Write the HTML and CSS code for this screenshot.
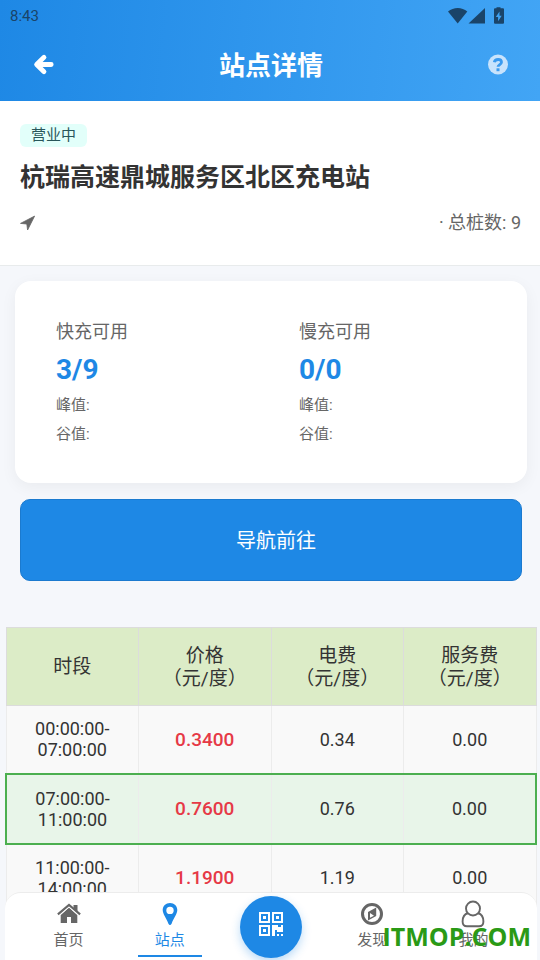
FILE: index.html
```html
<!DOCTYPE html>
<html lang="zh-CN">
<head>
<meta charset="utf-8">
<meta name="viewport" content="width=device-width, initial-scale=1">
<title>站点详情</title>
<link rel="stylesheet" href="styles.css">
</head>
<body>
<div class="app">
  <header class="header">
    <div class="status">
      <span>8:43</span>
      <svg class="status-icons" viewBox="0 0 58 18" aria-hidden="true">
        <path d="M0 4.500C5.500-.2 14-.2 19.300 4.500L9.700 16.500z"/>
        <path d="M37 1v15.500H20.500z"/>
        <path fill-rule="evenodd" d="M48.500 1.200v-.9h4v.9h2.500q1 0 1 1v13.500q0 1-1 1h-8q-1 0-1-1V2.200q0-1 1-1zM51.500 4.500l-3.700 5.500h2.300v4.300l3.600-5.600h-2.200z"/>
      </svg>
    </div>
    <div class="title-bar">
      <button class="icon-btn" type="button" aria-label="返回">
        <svg class="back" viewBox="0 0 20 20" aria-hidden="true"><path d="M10 2.300L2.600 9.500l7.400 7.200M4 9.500h13.200" fill="none" stroke="#fff" stroke-width="4.800" stroke-linecap="round" stroke-linejoin="round"/></svg>
      </button>
      <h1>站点详情</h1>
      <button class="icon-btn" type="button" aria-label="帮助">
        <svg class="help" viewBox="0 0 20 20" aria-hidden="true"><circle cx="10" cy="9.500" r="10" fill="#c8e3fc"/><path d="M6.300 7.300C7 3.500 13.500 3.600 13.500 7.300C13.500 9.500 10 9.600 10 11.800" fill="none" stroke="#3b9bf0" stroke-width="2.800"/><path d="M8.500 13.300h3v2.900h-3z" fill="#3b9bf0"/></svg>
      </button>
    </div>
  </header>

  <main class="content">
    <section class="info">
      <span class="chip">营业中</span>
      <h2>杭瑞高速鼎城服务区北区充电站</h2>
      <div class="meta">
        <svg class="arrow" viewBox="0 0 15 15" aria-hidden="true"><path d="M14.600.1L7.600 14 6.800 8 .5 7.400z" fill="#666" stroke="#666" stroke-width=".8" stroke-linejoin="round"/></svg>
        <span>· 总桩数: 9</span>
      </div>
    </section>

    <section class="card">
      <div class="stat">
        <p class="label">快充可用</p>
        <p class="value">3/9</p>
        <p class="sub">峰值:</p>
        <p class="sub">谷值:</p>
      </div>
      <div class="stat">
        <p class="label">慢充可用</p>
        <p class="value">0/0</p>
        <p class="sub">峰值:</p>
        <p class="sub">谷值:</p>
      </div>
    </section>

    <button class="go" type="button">导航前往</button>

    <table class="prices">
      <thead>
        <tr><th>时段</th><th>价格<br>（元/度）</th><th>电费<br>（元/度）</th><th>服务费<br>（元/度）</th></tr>
      </thead>
      <tbody>
        <tr><td>00:00:00-<br>07:00:00</td><td class="price">0.3400</td><td>0.34</td><td>0.00</td></tr>
        <tr class="current"><td>07:00:00-<br>11:00:00</td><td class="price">0.7600</td><td>0.76</td><td>0.00</td></tr>
        <tr><td>11:00:00-<br>14:00:00</td><td class="price">1.1900</td><td>1.19</td><td>0.00</td></tr>
      </tbody>
    </table>
  </main>

  <nav class="tabs">
    <a class="tab" href="#home">
      <svg viewBox="0 0 24 24" aria-hidden="true"><path d="M16.500 3h4v7.500l-4-4zM12 5.600l8.300 7.400v8H14v-6h-4v6H3.700v-8z" fill="#666"/><path d="M.9 12.300L12 2.900l11.100 9.400" fill="none" stroke="#666" stroke-width="2.200"/><path d="M2.600 13.300L12 5.200l9.400 8.100" fill="none" stroke="#fff" stroke-width=".8"/></svg>
      <span>首页</span>
    </a>
    <a class="tab active" href="#stations">
      <svg viewBox="0 0 24 24" aria-hidden="true"><path fill-rule="evenodd" d="M12 1C7.800 1 4.700 4.100 4.700 8.100C4.700 12 8.500 16.500 10.300 21.500Q12 24.500 13.700 21.500C15.500 16.500 19.300 12 19.300 8.100C19.300 4.100 16.200 1 12 1zM12 4.700a3.700 3.700 0 1 1 0 7.400a3.700 3.700 0 0 1 0-7.400z" fill="#1e88e5"/></svg>
      <span>站点</span>
    </a>
    <a class="tab" href="#scan" aria-label="扫码">
      <span class="scan">
        <svg viewBox="0 0 24 24" aria-hidden="true"><path fill-rule="evenodd" fill="#fff" d="M0 0h11v11H0zM2 2v7h7V2zM4 4h3v3H4zM13 0h11v11H13zM15 2v7h7V2zM17 4h3v3h-3zM0 13h11v11H0zM2 15v7h7v-7zM4 17h3v3H4zM13 13h6v2h3v-2h2v7h-6v-2h-2v6h-3zM18 22h2v2h-2zM22 22h2v2h-2z"/></svg>
      </span>
    </a>
    <a class="tab" href="#discover">
      <svg viewBox="0 0 24 24" aria-hidden="true"><circle cx="12" cy="12" r="9.500" fill="none" stroke="#666" stroke-width="3"/><path fill-rule="evenodd" d="M16.200 5.500v8.600L8 18.500V9.900zM10 11v4.800l4-2.100z" fill="#666"/></svg>
      <span>发现</span>
    </a>
    <a class="tab" href="#me">
      <svg class="person" viewBox="0 0 24 28" aria-hidden="true"><g fill="none" stroke="#666" stroke-width="1.900"><circle cx="12" cy="8.500" r="7"/><path d="M7 13.200C3.500 14 1.600 17 1.600 21.500Q1.600 26.300 6 26.300h12q4.400 0 4.400-4.800C22.400 17 20.500 14 17 13.200"/></g></svg>
      <span>我的</span>
    </a>
  </nav>
  <div class="watermark">ITMOP.COM</div>
</div>
</body>
</html>
```
FILE: styles.css
```css
* { box-sizing: border-box; }

body {
  margin: 0;
  background: #f5f7fb;
  color: #333;
  font-family: Roboto, "Noto Sans CJK SC", sans-serif;
}

h1, h2, p { margin: 0; }
button { border: 0; font: inherit; cursor: pointer; }

.app {
  position: relative;
  display: flex;
  flex-direction: column;
  height: 100vh;
  overflow: hidden;
}

.header {
  flex: none;
  padding-bottom: 8px;
  background: linear-gradient(96deg, #1e88e5, #42a5f5);
}

.status {
  display: flex;
  justify-content: space-between;
  align-items: center;
  height: 30px;
  padding: 1px 34px 0 10px;
  color: #1a4469;
  font-size: 15px;
}

.status-icons { width: 58px; height: 18px; fill: #1a4469; }

.title-bar {
  display: flex;
  justify-content: space-between;
  align-items: center;
  height: 63px;
  padding: 6px 32px 0 34px;
}

.title-bar h1 {
  padding-top: 2px;
  color: #fff;
  font-size: 26px;
  font-weight: 700;
  line-height: 36px;
}

.icon-btn { display: flex; padding: 0; background: none; }
.icon-btn svg { width: 20px; height: 20px; overflow: visible; }

.content {
  flex: 1;
  overflow-y: auto;
  scrollbar-width: none;
}

.info {
  height: 165px;
  padding: 23px 19px 0 20px;
  background: #fff;
  border-bottom: 1px solid #e8ebec;
}

.chip {
  display: block;
  width: fit-content;
  padding: 0 11px;
  border-radius: 6px;
  background: #e2fffa;
  color: #28565a;
  font-size: 15px;
  line-height: 23px;
}

.info h2 {
  margin-top: 13px;
  font-size: 25px;
  font-weight: 700;
  line-height: 36px;
}

.meta {
  display: flex;
  justify-content: space-between;
  align-items: center;
  margin-top: 15px;
  color: #666;
  font-size: 18px;
  line-height: 24px;
}

.arrow { width: 15px; height: 15px; overflow: visible; }

.card {
  display: grid;
  grid-template-columns: 1fr 1fr;
  margin: 15px 13px 16px 15px;
  padding: 36px 13px 34px;
  border-radius: 16px;
  background: #fff;
  box-shadow: 0 4px 16px rgba(0, 0, 0, 0.05);
}

.stat { padding: 0 28px; color: #666; }
.label { font-size: 18px; line-height: 30px; }
.value {
  padding-top: 1px;
  color: #1e88e5;
  font-size: 28px;
  font-weight: 700;
  line-height: 43px;
}
.sub { font-size: 15px; line-height: 29px; }

.go {
  display: block;
  width: calc(100% - 38px);
  height: 82px;
  margin: 0 18px 46px 20px;
  padding: 0 0 2px 10px;
  border: 1px solid #1b7acf;
  border-radius: 10px;
  background: #1e88e5;
  color: #fff;
  font-size: 20px;
}

.prices {
  width: calc(100% - 8px);
  margin: 0 3px 0 5px;
  border-collapse: collapse;
  table-layout: fixed;
  text-align: center;
}

.prices th {
  height: 78px;
  padding: 0;
  border: 1px solid #dcdcdc;
  background: #dcecc7;
  font-size: 19px;
  font-weight: 400;
  line-height: 23px;
}

.prices td {
  height: 68px;
  padding: 0;
  border: 1px solid #ececec;
  background: #f9f9f9;
  font-size: 18px;
  line-height: 21px;
}

.prices .price { color: #e63946; font-size: 19px; font-weight: 500; }
.prices .current { border: 2px solid #4caf50; }
.prices .current td {
  height: 70px;
  border-top: 2px solid #4caf50;
  border-bottom: 2px solid #4caf50;
  background: #e8f5e9;
}

.tabs {
  position: absolute;
  right: 3px;
  bottom: 0;
  left: 5px;
  display: flex;
  height: 68px;
  padding: 0 13px;
  border-top: 1px solid #ececec;
  border-radius: 16px 16px 0 0;
  background: #fff;
}

.tab {
  position: relative;
  display: flex;
  flex: 1;
  flex-direction: column;
  align-items: center;
  gap: 3px;
  padding-top: 9px;
  color: #666;
  font-size: 15px;
  line-height: 22px;
  text-decoration: none;
}

.tab svg { width: 24px; height: 24px; }
.tab .person { height: 28px; margin: -2px 0; }
.tab.active { color: #1e88e5; }

.tab.active::after {
  content: "";
  position: absolute;
  bottom: 3px;
  width: 64px;
  height: 2px;
  background: #1e88e5;
}

.scan {
  display: flex;
  flex: none;
  justify-content: center;
  width: 62px;
  height: 62px;
  margin-top: -6px;
  padding-top: 16px;
  border-radius: 50%;
  background: #1e88e5;
  box-shadow: 0 4px 10px rgba(30, 136, 229, 0.3);
}

.watermark {
  position: absolute;
  right: 9px;
  bottom: 6px;
  color: #2a9a16;
  font-family: "Open Sans", sans-serif;
  font-size: 25px;
  font-weight: 700;
  line-height: 36px;
  pointer-events: none;
}
```
